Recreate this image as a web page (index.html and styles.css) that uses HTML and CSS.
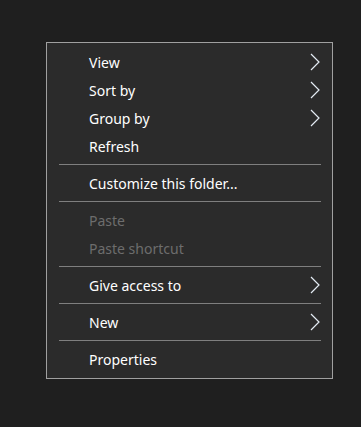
FILE: index.html
```html
<!DOCTYPE html>
<html>
<head>
    <link rel="stylesheet" href="styles.css">
</head>
<body>
    <div class="context-menu">
        <div class="menu-item has-sub">
            <span class="label">View</span>
            <svg class="chevron" width="10" height="18" viewBox="0 0 10 18"><path d="M1 1 L9 9 L1 17" /></svg>
        </div>
        <div class="menu-item has-sub">
            <span class="label">Sort by</span>
            <svg class="chevron" width="10" height="18" viewBox="0 0 10 18"><path d="M1 1 L9 9 L1 17" /></svg>
        </div>
        <div class="menu-item has-sub">
            <span class="label">Group by</span>
            <svg class="chevron" width="10" height="18" viewBox="0 0 10 18"><path d="M1 1 L9 9 L1 17" /></svg>
        </div>
        <div class="menu-item">
            <span class="label">Refresh</span>
        </div>
        <div class="separator"></div>
        <div class="menu-item">
            <span class="label">Customize this folder...</span>
        </div>
        <div class="separator"></div>
        <div class="menu-item disabled">
            <span class="label">Paste</span>
        </div>
        <div class="menu-item disabled">
            <span class="label">Paste shortcut</span>
        </div>
        <div class="separator"></div>
        <div class="menu-item has-sub">
            <span class="label">Give access to</span>
            <svg class="chevron" width="10" height="18" viewBox="0 0 10 18"><path d="M1 1 L9 9 L1 17" /></svg>
        </div>
        <div class="separator"></div>
        <div class="menu-item has-sub">
            <span class="label">New</span>
            <svg class="chevron" width="10" height="18" viewBox="0 0 10 18"><path d="M1 1 L9 9 L1 17" /></svg>
        </div>
        <div class="separator"></div>
        <div class="menu-item">
            <span class="label">Properties</span>
        </div>
    </div>
</body>
</html>
```

FILE: styles.css
```css
body {
    margin: 0;
    padding: 42px 0 0 46px;
    background-color: #1f1f1f;
    font-family: "Noto Sans", "Open Sans", sans-serif;
    min-height: 100vh;
    box-sizing: border-box;
}

.context-menu {
    width: 285px;
    background: #2b2b2b;
    border: 1px solid #a0a0a0;
    padding: 5px 0 5px 0;
}

.menu-item {
    display: flex;
    align-items: center;
    justify-content: space-between;
    height: 28px;
    padding: 0 12px 0 42px;
    color: #ffffff;
    font-size: 14px;
}

.menu-item.disabled {
    color: #6d6d6d;
}

.chevron path {
    fill: none;
    stroke: #e4ecf4;
    stroke-width: 1.2;
}

.separator {
    height: 1px;
    background: #7f7f7f;
    margin: 4px 11px 4px 12px;
}
```
